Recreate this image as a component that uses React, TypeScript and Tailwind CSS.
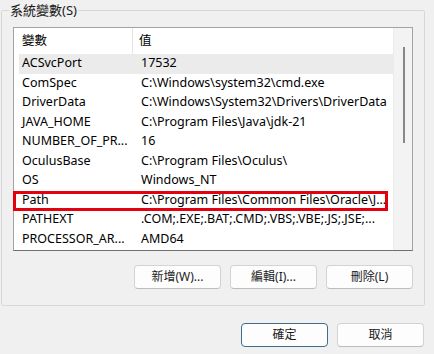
const rows: [string, string][] = [
  ['ACSvcPort', '17532'],
  ['ComSpec', 'C:\\Windows\\system32\\cmd.exe'],
  ['DriverData', 'C:\\Windows\\System32\\Drivers\\DriverData'],
  ['JAVA_HOME', 'C:\\Program Files\\Java\\jdk-21'],
  ['NUMBER_OF_PR...', '16'],
  ['OculusBase', 'C:\\Program Files\\Oculus\\'],
  ['OS', 'Windows_NT'],
  ['Path', 'C:\\Program Files\\Common Files\\Oracle\\J...'],
  ['PATHEXT', '.COM;.EXE;.BAT;.CMD;.VBS;.VBE;.JS;.JSE;...'],
  ['PROCESSOR_AR...', 'AMD64'],
];

const font = { fontFamily: '"Noto Sans", "Noto Sans CJK TC", sans-serif' };

function Button({ label, primary }: { label: string; primary?: boolean }) {
  return (
    <button
      className={
        primary
          ? 'w-[87px] h-[24px] rounded-[4px] border border-[#3d6e8e] bg-[#fdfdfd] text-[12px] text-[#1b1b1b]'
          : 'w-[87px] h-[24px] rounded-[4px] border border-[#d3d3d3] border-b-[#bcbcbc] bg-[#fdfdfd] text-[12px] text-[#1b1b1b]'
      }
    >
      {label}
    </button>
  );
}

export default function App() {
  return (
    <div className="w-[434px] h-[354px] bg-[#f0f0f0] overflow-hidden text-black" style={font}>
      {/* 系統變數 群組 */}
      <fieldset className="ml-[1px] w-[424px] h-[306px] border border-[#d7d7d7] rounded-[2px]">
        <legend className="ml-[7px] px-[1px] text-[13px] leading-[20px] text-[#1a1a1a]">系統變數(S)</legend>

        <div className="relative ml-[11px] mt-[7px] w-[400px] h-[224px] border border-[#a3a3a3] border-b-[#6f6f6f] bg-white flex">
          <div className="w-[379px] flex flex-col">
            {/* 標題列 */}
            <div className="h-[26px] flex items-center text-[12.5px]">
              <div className="w-[119px] h-full pl-[8px] flex items-center border-r border-[#e5e5e5]">變數</div>
              <div className="pl-[6px]">值</div>
            </div>
            {rows.map(([name, value], i) => (
              <div
                key={name}
                className={
                  i === 0
                    ? 'ml-[5px] h-[19.5px] flex items-center text-[12.5px] bg-[#ebebeb]'
                    : 'ml-[5px] h-[19.5px] flex items-center text-[12.5px]'
                }
              >
                <div className="w-[119px] pl-[3px] whitespace-nowrap overflow-hidden">{name}</div>
                <div className="pl-[3px] whitespace-nowrap">{value}</div>
              </div>
            ))}
          </div>
          {/* 捲軸 */}
          <div className="flex-1 bg-[#f3f3f3] border-l border-[#ececec]">
            <div className="ml-[9px] mt-[19px] w-[2px] h-[96px] bg-[#888888]" />
          </div>

          {/* 紅框標示 */}
          <div className="absolute left-[-1px] top-[163px] w-[375px] h-[20px] border-[3px] border-[#e3000f]" />
        </div>

        <div className="mt-[14px] w-[411px] flex justify-end gap-[9px]">
          <Button label="新增(W)..." />
          <Button label="編輯(I)..." />
          <Button label="刪除(L)" />
        </div>
      </fieldset>

      <div className="mt-[17px] pr-[10px] flex justify-end gap-[9px]">
        <Button label="確定" primary />
        <Button label="取消" />
      </div>
    </div>
  );
}
